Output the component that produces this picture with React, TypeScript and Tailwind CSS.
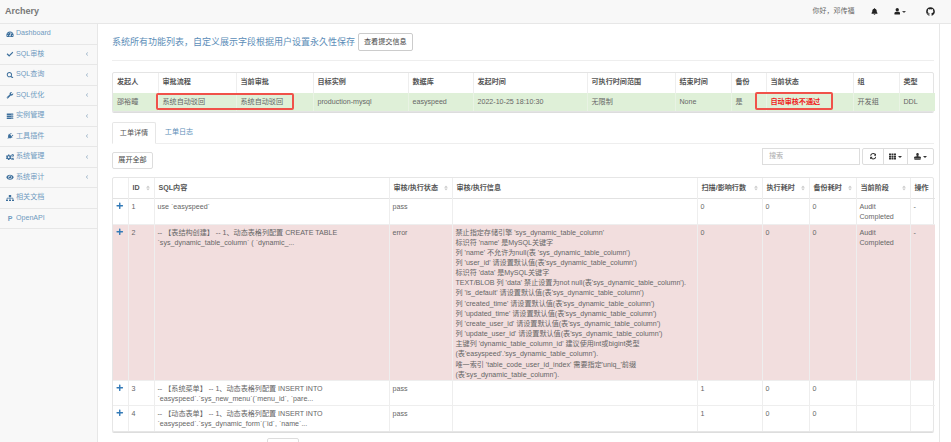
import {
  FaBell, FaCheck, FaChevronLeft, FaCogs, FaEye, FaGithub, FaPlug, FaPlus, FaSearch, FaServer,
  FaSitemap, FaSort, FaStamp, FaSyncAlt, FaTachometerAlt, FaTh, FaUser, FaWrench,
} from 'react-icons/fa';
import { Fragment } from 'react';

const menu = [
  { label: 'Dashboard', icon: FaTachometerAlt },
  { label: 'SQL审核', icon: FaCheck, sub: true },
  { label: 'SQL查询', icon: FaSearch, sub: true },
  { label: 'SQL优化', icon: FaWrench, sub: true },
  { label: '实例管理', icon: FaServer, sub: true },
  { label: '工具插件', icon: FaPlug, sub: true, tilt: true },
  { label: '系统管理', icon: FaCogs, sub: true },
  { label: '系统审计', icon: FaEye, sub: true },
  { label: '相关文档', icon: FaSitemap },
  { label: 'OpenAPI' },
];

const topCols = [45, 78, 77, 95, 65, 114, 88, 56, 35, 87, 46, 36];
const topHead = ['发起人', '审批流程', '当前审批', '目标实例', '数据库', '发起时间', '可执行时间范围', '结束时间', '备份', '当前状态', '组', '类型'];
const topRow = ['邵裕疃', '系统自动驳回', '系统自动驳回', 'production-mysql', 'easyspeed', '2022-10-25 18:10:30', '无限制', 'None', '是', '自动审核不通过', '开发组', 'DDL'];

const cols = [15, 26, 235, 63, 245, 65, 47, 47, 54, 25];
const head = ['', 'ID', 'SQL内容', '审核/执行状态', '审核/执行信息', '扫描/影响行数', '执行耗时', '备份耗时', '当前阶段', '操作'];

const errorInfo = [
  "禁止指定存储引擎 'sys_dynamic_table_column'",
  "标识符 'name' 是MySQL关键字",
  "列 'name' 不允许为null(表 'sys_dynamic_table_column')",
  "列 'user_id' 请设置默认值(表'sys_dynamic_table_column')",
  "标识符 'data' 是MySQL关键字",
  "TEXT/BLOB 列 'data' 禁止设置为not null(表'sys_dynamic_table_column').",
  "列 'is_default' 请设置默认值(表'sys_dynamic_table_column')",
  "列 'created_time' 请设置默认值(表'sys_dynamic_table_column')",
  "列 'updated_time' 请设置默认值(表'sys_dynamic_table_column')",
  "列 'create_user_id' 请设置默认值(表'sys_dynamic_table_column')",
  "列 'update_user_id' 请设置默认值(表'sys_dynamic_table_column')",
  "主键列 'dynamic_table_column_id' 建议使用int或bigint类型",
  "(表'easyspeed'.'sys_dynamic_table_column').",
  "唯一索引 'table_code_user_id_index' 需要指定'uniq_'前缀",
  "(表'sys_dynamic_table_column').",
];

const rows = [
  { id: 1, sql: 'use `easyspeed`', status: 'pass', h: 'h-[26px]' },
  { id: 2, sql: '-- 【表结构创建】 -- 1、动态表格列配置 CREATE TABLE `sys_dynamic_table_column` ( `dynamic_...', status: 'error', info: errorInfo, h: 'h-[156px]', error: true },
  { id: 3, sql: '-- 【系统菜单】 -- 1、动态表格列配置 INSERT INTO `easyspeed`.`sys_new_menu`(`menu_id`, `pare...', status: 'pass', scan: 1, h: 'h-[25px]' },
  { id: 4, sql: '-- 【动态表单】 -- 1、动态表格列配置 INSERT INTO `easyspeed`.`sys_dynamic_form`(`id`, `name`...', status: 'pass', scan: 1, h: 'h-[26px]' },
];

function Navbar() {
  return (
    <header className="flex h-[24px] items-center border-b border-[#e7e7e7] bg-[#f8f8f8] pl-[5px] pr-[16px]">
      <span className="text-[9px] font-bold text-[#777]">Archery</span>
      <span className="ml-auto text-[7px] text-[#666]">你好，邓传福</span>
      <FaBell className="ml-[16px] text-[7px] text-[#222]" />
      <FaUser className="ml-[16px] text-[6.5px] text-[#222]" />
      <span className="ml-[2px] border-x-[2px] border-t-[2.5px] border-x-transparent border-t-[#444]" />
      <FaGithub className="ml-[20px] text-[9px] text-[#222]" />
    </header>
  );
}

function Sidebar() {
  return (
    <aside className="w-[98px] shrink-0 border-r border-[#e7e7e7] bg-[#f8f8f8]">
      {menu.map((m) => (
        <div key={m.label} className="flex h-[20.5px] items-center border-b border-[#e7e7e7] pl-[6px] pr-[8px] text-[7.1px] text-[#6f9abf]">
          {m.icon ? (
            <m.icon className={`w-[8px] shrink-0 text-[6.5px] text-[#3d6f9c] ${m.tilt ? 'rotate-45' : ''}`} />
          ) : (
            <span className="w-[8px] shrink-0 text-center text-[7px] font-bold leading-none text-[#6f9abf]">P</span>
          )}
          <span className="ml-[2px]">{m.label}</span>
          {m.sub && <FaChevronLeft className="ml-auto text-[4px] text-[#9db4c8]" />}
        </div>
      ))}
    </aside>
  );
}

function OrderTable() {
  return (
    <div className="relative mt-[11px] rounded-[2px] border border-[#e4e4e4] shadow-[0_1px_0_#ddd]">
      <table className="w-full table-fixed border-collapse text-[7.1px] text-[#666]">
        <colgroup>{topCols.map((w, i) => <col key={i} style={{ width: w }} />)}</colgroup>
        <thead>
          <tr className="h-[20px]">
            {topHead.map((h) => <th key={h} className="border-l border-[#eee] px-[4px] pb-[1px] text-left font-bold text-[#555] first:border-l-0">{h}</th>)}
          </tr>
        </thead>
        <tbody>
          <tr className="h-[18px] bg-[#dff0d8]">
            {topRow.map((c, i) => (
              <td key={i} className={`whitespace-nowrap border-l border-[#e9f3e4] px-[4px] first:border-l-0 ${i === 9 ? 'font-bold text-[#f01c1c]' : ''}`}>{c}</td>
            ))}
          </tr>
        </tbody>
      </table>
      <div className="absolute left-[43px] top-[20px] h-[17px] w-[138px] rounded-[2px] border-2 border-[#f0524a]" />
      <div className="absolute left-[642px] top-[19px] h-[18px] w-[78px] rounded-[2px] border-2 border-[#f0524a]" />
    </div>
  );
}

function AuditTable() {
  return (
    <div className="mt-[8px] rounded-[2px] border border-[#e6e6e6] shadow-[0_1px_0_#ddd]">
      <table className="w-full table-fixed border-collapse text-[7.1px] leading-[10.15px] text-[#666]">
        <colgroup>{cols.map((w, i) => <col key={i} style={{ width: w }} />)}</colgroup>
        <thead>
          <tr className="h-[20px] border-b border-[#e2e2e2]">
            {head.map((h, i) => (
              <th key={i} className="relative border-l border-[#eee] pl-[4px] text-left font-bold text-[#555] first:border-l-0">
                {h}
                {i > 0 && i < 9 && i !== 2 && i !== 4 && <FaSort className="absolute right-[3px] top-[7px] text-[6px] text-[#ccc]" />}
              </th>
            ))}
          </tr>
        </thead>
        <tbody>
          {rows.map((r) => (
            <tr key={r.id} className={`${r.h} border-b border-[#eee] align-top last:border-b-0 ${r.error ? 'bg-[#f2dede]' : ''}`}>
              <td className="pl-[3px] pt-[3px]"><FaPlus className="text-[7.5px] text-[#337ab7]" /></td>
              <td className="border-l border-[#eee] pl-[3px] pt-[3px]">{r.id}</td>
              <td className="border-l border-[#eee] pl-[3px] pr-[30px] pt-[3px]">{r.sql}</td>
              <td className="border-l border-[#eee] pl-[3px] pt-[3px]">{r.status}</td>
              <td className="border-l border-[#eee] pl-[3px] pt-[3px]">
                {r.info?.map((line) => <Fragment key={line}>{line}<br /></Fragment>)}
              </td>
              <td className="border-l border-[#eee] pl-[3px] pt-[3px]">{r.scan ?? 0}</td>
              <td className="border-l border-[#eee] pl-[3px] pt-[3px]">0</td>
              <td className="border-l border-[#eee] pl-[3px] pt-[3px]">0</td>
              <td className="border-l border-[#eee] pl-[3px] pt-[3px]">{r.id < 3 && <>Audit<br />Completed</>}</td>
              <td className="border-l border-[#eee] pl-[3px] pt-[3px]">{r.id < 3 && '-'}</td>
            </tr>
          ))}
        </tbody>
      </table>
    </div>
  );
}

export default function App() {
  return (
    <div className="flex h-[442px] w-[951px] flex-col overflow-hidden bg-white font-['Liberation_Sans','Noto_Sans_CJK_SC',sans-serif]">
      <Navbar />
      <div className="flex min-h-0 flex-1">
        <Sidebar />
        <main className="w-[842px] shrink-0 border-r border-[#e7e7e7] pl-[14px] pr-[5px]">
          <div className="flex h-[37px] items-end border-b border-[#eee] pb-[9px]">
            <h1 className="text-[9px] leading-[18px] text-[#5b8db8]">系统所有功能列表，自定义展示字段根据用户设置永久性保存</h1>
            <button className="ml-[3px] h-[18px] rounded-[2px] border border-[#ccc] px-[5px] text-[7.1px] text-[#444]">查看提交信息</button>
          </div>
          <OrderTable />
          <nav className="mt-[10px] flex h-[22px] border-b border-[#eee] text-[7.1px]">
            <span className="flex h-[22px] w-[44px] items-center justify-center rounded-t-[2px] border border-b-white border-[#e6e6e6] bg-white text-[#555]">工单详情</span>
            <span className="ml-[1px] flex w-[44px] items-center justify-center text-[#5b8db8]">工单日志</span>
          </nav>
          <div className="mt-[4px] flex h-[21px] items-start">
            <button className="mt-[4px] h-[17px] w-[41px] rounded-[2px] border border-[#ddd] text-[7.1px] text-[#444]">展开全部</button>
            <div className="ml-auto flex h-[17px] w-[98px] items-center border border-[#ddd] pl-[6px] text-[7.1px] text-[#aaa]">搜索</div>
            <div className="ml-[2px] flex h-[17px] w-[72px] items-center rounded-[2px] border border-[#ddd] text-[#333]">
              <span className="flex h-full w-[20px] items-center justify-center"><FaSyncAlt className="text-[6.5px]" /></span>
              <span className="flex h-full w-[24px] items-center justify-center gap-[2px] border-l border-[#ddd]"><FaTh className="text-[7px]" /><span className="border-x-[2px] border-t-[2.5px] border-x-transparent border-t-[#333]" /></span>
              <span className="flex h-full flex-1 items-center justify-center gap-[2px] border-l border-[#ddd]"><FaStamp className="text-[7px]" /><span className="border-x-[2px] border-t-[2.5px] border-x-transparent border-t-[#333]" /></span>
            </div>
          </div>
          <AuditTable />
          <div className="ml-[155px] mt-[6px] h-[10px] w-[32px] rounded-[2px] border border-[#ddd]" />
        </main>
      </div>
    </div>
  );
}
